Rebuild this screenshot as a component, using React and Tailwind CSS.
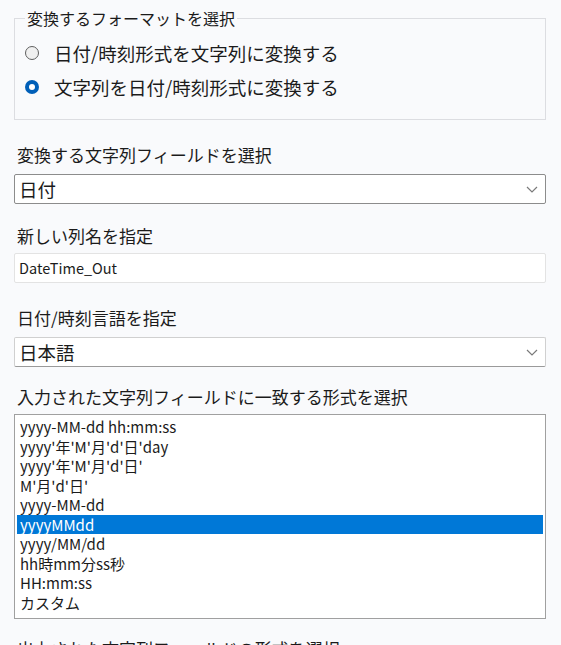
import { useState } from 'react';

const formats = [
  "yyyy-MM-dd hh:mm:ss",
  "yyyy'年'M'月'd'日'day",
  "yyyy'年'M'月'd'日'",
  "M'月'd'日'",
  "yyyy-MM-dd",
  "yyyyMMdd",
  "yyyy/MM/dd",
  "hh時mm分ss秒",
  "HH:mm:ss",
  "カスタム",
];

function Radio({ checked, label }) {
  return (
    <label className="flex items-center h-[34px]">
      {checked ? (
        <span className="w-[14px] h-[14px] rounded-full bg-[#005fb8] flex items-center justify-center">
          <span className="w-[6px] h-[6px] rounded-full bg-white" />
        </span>
      ) : (
        <span className="w-[14px] h-[14px] rounded-full border-[1.5px] border-[#5f5f5f] bg-[#f0f0f0]" />
      )}
      <span className="ml-[15px] text-[18.5px] leading-[24px]">{label}</span>
    </label>
  );
}

function Select({ value, dark }) {
  return (
    <div
      className={`h-[30px] flex items-center justify-between bg-white rounded-[2px] border ${
        dark ? 'border-[#8c8c8c]' : 'border-[#d0d0d0] border-b-[#9a9a9a]'
      }`}
    >
      <span className="pl-[4px] text-[18.5px] leading-[24px]">{value}</span>
      <svg width="12" height="7" viewBox="0 0 12 7" className="mr-[7px]">
        <path d="M1 1l5 5 5-5" fill="none" stroke="#7a7a7a" strokeWidth="1.2" />
      </svg>
    </div>
  );
}

export default function App() {
  const [selected] = useState(5);

  return (
    <div className="w-[561px] h-[645px] overflow-hidden bg-[#f9fafc] text-[#1b1b1b] pl-[14px] pr-[15px] font-['Noto_Sans_CJK_JP',sans-serif]">
      <fieldset className="mt-[8px] border border-[#dcdde1] px-[10px] pb-[15px]">
        <legend className="px-[2px] text-[16px] leading-[20px]">変換するフォーマットを選択</legend>
        <div className="mt-[8px] flex flex-col">
          <Radio label="日付/時刻形式を文字列に変換する" />
          <Radio checked label="文字列を日付/時刻形式に変換する" />
        </div>
      </fieldset>

      <p className="mt-[24px] pl-[3px] text-[17px] leading-[21px]">変換する文字列フィールドを選択</p>
      <div className="mt-[9px]">
        <Select value="日付" dark />
      </div>

      <p className="mt-[21px] pl-[3px] text-[17px] leading-[21px]">新しい列名を指定</p>
      <div className="mt-[7px] h-[30px] flex items-center bg-white border border-[#e3e3e3] rounded-[2px]">
        <span className="pl-[4px] text-[14.5px] leading-[20px]">DateTime_Out</span>
      </div>

      <p className="mt-[24px] pl-[3px] text-[17px] leading-[21px]">日付/時刻言語を指定</p>
      <div className="mt-[9px]">
        <Select value="日本語" />
      </div>

      <p className="mt-[19px] pl-[3px] text-[17px] leading-[21px]">入力された文字列フィールドに一致する形式を選択</p>
      <div className="mt-[7px] h-[205px] bg-white border border-[#a0a0a0] p-[2px] pt-[2px]">
        {formats.map((f, i) => (
          <div
            key={f}
            className={`h-[19.5px] pl-[3px] text-[15px] leading-[19.5px] whitespace-nowrap ${
              i === selected ? 'bg-[#0078d7] text-white' : ''
            }`}
          >
            {f}
          </div>
        ))}
      </div>

      <p className="mt-[19px] pl-[3px] text-[17px] leading-[21px]">出力された文字列フィールドの形式を選択</p>
    </div>
  );
}
